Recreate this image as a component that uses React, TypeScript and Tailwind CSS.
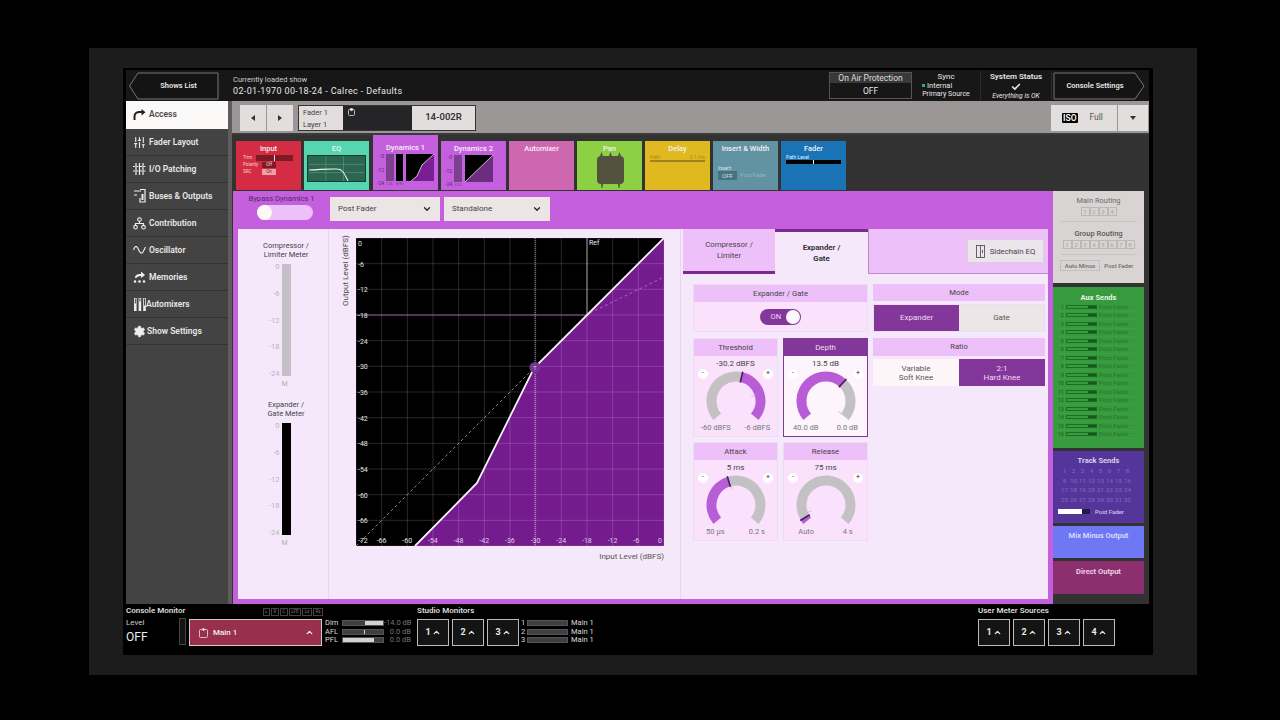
import React from "react";
import { ChevronDown, ChevronUp, Check, Settings, SlidersVertical } from "lucide-react";

function polar(cx: number, cy: number, r: number, deg: number) {
  const a = ((deg - 90) * Math.PI) / 180;
  return [cx + r * Math.cos(a), cy + r * Math.sin(a)];
}
function arc(cx: number, cy: number, r: number, a0: number, a1: number) {
  const [x0, y0] = polar(cx, cy, r, a0);
  const [x1, y1] = polar(cx, cy, r, a1);
  const large = a1 - a0 > 180 ? 1 : 0;
  return `M${x0} ${y0}A${r} ${r} 0 ${large} 1 ${x1} ${y1}`;
}

const NAV_ICONS: Record<string, React.ReactNode> = {
  Access: (
    <svg width="13" height="12" viewBox="0 0 13 12" fill="none" stroke="#222" strokeWidth="2">
      <path d="M1.5 11V7.5C1.5 4.5 4 3 6.5 3H10" />
      <path d="M8.5 0L12.5 3.2L8.5 6.4Z" fill="#222" stroke="none" />
    </svg>
  ),
  "Fader Layout": <SlidersVertical size={13} color="#eee" strokeWidth={2} />,
  "I/O Patching": (
    <svg width="13" height="12" viewBox="0 0 13 12" fill="none" stroke="#eee" strokeWidth="1.2">
      <path d="M3 0V12M6.5 0V12M10 0V12" />
      <path d="M0 3.5H13M0 8H13" strokeDasharray="2 1.5" />
    </svg>
  ),
  "Buses & Outputs": (
    <svg width="12" height="14" viewBox="0 0 12 14" fill="none" stroke="#eee" strokeWidth="1.2">
      <path d="M0 2H7M0 6H3M6 0.5H11V13H6V9" />
      <path d="M8.5 5V11" strokeWidth="2" />
    </svg>
  ),
  Contribution: (
    <svg width="13" height="13" viewBox="0 0 13 13" fill="none" stroke="#eee" strokeWidth="1.1">
      <circle cx="6.5" cy="2.5" r="1.8" />
      <circle cx="2.5" cy="10.2" r="1.8" />
      <circle cx="10.5" cy="10.2" r="1.8" />
      <path d="M6.5 4.3V6.5M2.5 8.4V6.5H10.5V8.4" />
    </svg>
  ),
  Oscillator: (
    <svg width="13" height="8" viewBox="0 0 13 8" fill="none" stroke="#eee" strokeWidth="1.1">
      <path d="M0.5 4C2 -1 4 -0.5 5.5 3.5C7 7.5 9 8 10 6L12.5 1" />
    </svg>
  ),
  Memories: (
    <svg width="13" height="12" viewBox="0 0 13 12" fill="#eee" stroke="none">
      <circle cx="2" cy="10.5" r="1.3" />
      <circle cx="6.5" cy="10.5" r="1.3" />
      <circle cx="11" cy="10.5" r="1.3" />
      <path d="M2 7C2 4 4 3 8 3V0.5L12 4L8 7V5C5 5 4 6 3.5 7Z" />
    </svg>
  ),
  Automixers: (
    <svg width="12" height="13" viewBox="0 0 12 13" fill="#eee">
      <rect x="0" y="0" width="2.6" height="13" />
      <rect x="4.6" y="0" width="2.6" height="13" />
      <rect x="9.2" y="0" width="2.6" height="13" />
      <rect x="0.8" y="0.5" width="1" height="5" fill="#444" />
      <rect x="5.4" y="0.5" width="1" height="3" fill="#444" />
      <rect x="10" y="0.5" width="1" height="7" fill="#444" />
    </svg>
  ),
  "Show Settings": <Settings size={13} color="#eee" fill="#eee" strokeWidth={1.5} />,
};

function NavItem({ label, active, gap }: { label: string; active?: boolean; gap: string }) {
  return (
    <div
      className={`flex items-center pl-[7px] border-b text-[8.5px] font-semibold ${gap} ${
        active ? "h-[28px] bg-[#fbf8f8] text-[#4a4a4a] border-[#fbf8f8]" : "h-[27px] bg-[#444343] text-[#e8e8e8] border-[#333]"
      }`}
    >
      <span className="w-[13px] flex justify-center shrink-0">{NAV_ICONS[label]}</span>
      <span>{label}</span>
    </div>
  );
}

function Tab({ title, w, bg, active, extra, children }: { title: string; w: string; bg: string; active?: boolean; extra?: string; children?: React.ReactNode }) {
  return (
    <div className={`${w} ${bg} ${extra ?? ""} ${active ? "h-[55px] pt-[8px]" : "h-[49px] pt-[3px] mt-[6px]"} flex flex-col items-center shrink-0 overflow-hidden`}>
      <div className="text-[7.5px] font-medium text-[#f6eef6] leading-[10px]">{title}</div>
      {children}
    </div>
  );
}

function MiniMeters({ double }: { double?: boolean }) {
  return (
    <div className="flex mt-[1px] w-full pl-[4px] gap-[2px]">
      <div className="flex flex-col justify-between h-[32px] text-[5px] text-[#5b2a6b] text-right w-[7px] leading-[5px]">
        <span>-0</span><span>-12</span><span>-24</span>
      </div>
      <div className="flex flex-col items-center">
        <div className="w-[8px] h-[27px] bg-[#7d3f8f]" />
        <span className="text-[4px] leading-[5px] text-[#6b3a7a]">C/L</span>
      </div>
      {double && (
        <div className="flex flex-col items-center">
          <div className="w-[7px] h-[27px] bg-black" />
          <span className="text-[4px] leading-[5px] text-[#6b3a7a]">E/G</span>
        </div>
      )}
      <svg width="28" height="27" viewBox="0 0 28 27" className="ml-[1px] bg-black">
        {double ? (
          <>
            <polygon points="5,27 11,22 16,11 28,0 28,27" fill="#7a1f93" />
            <polyline points="5,27 11,22 16,11 28,0" fill="none" stroke="#eee" strokeWidth="0.8" />
          </>
        ) : (
          <>
            <polygon points="0,27 28,0 28,27" fill="#6c2d80" />
            <line x1="0" y1="27" x2="28" y2="0" stroke="#d8c8dc" strokeWidth="0.9" />
          </>
        )}
      </svg>
    </div>
  );
}

function Graph() {
  const S = 308;
  const step = S / 12;
  const ticks = Array.from({ length: 13 }, (_, i) => i);
  return (
    <svg width={S} height={S} viewBox={`0 0 ${S} ${S}`} className="block bg-black shrink-0">
      <polygon points={`59,308 121,245 178,130 308,0 308,308`} fill="#741c8e" />
      {ticks.map((i) => (
        <g key={i}>
          <line x1={i * step} y1="0" x2={i * step} y2={S} stroke="#fff" strokeOpacity="0.2" strokeWidth="0.8" />
          <line x1="0" y1={i * step} x2={S} y2={i * step} stroke="#fff" strokeOpacity="0.2" strokeWidth="0.8" />
        </g>
      ))}
      <line x1="0" y1="77" x2="231" y2="77" stroke="#8a5a9c" strokeWidth="1" />
      <line x1="231" y1="0" x2="231" y2="77" stroke="#bbb" strokeWidth="0.8" />
      <line x1="179" y1="0" x2="179" y2="308" stroke="#ddd" strokeOpacity="0.7" strokeWidth="1" strokeDasharray="1 1" />
      <line x1="0" y1="308" x2="178" y2="130" stroke="#bbb" strokeWidth="0.7" strokeDasharray="3 2.5" />
      <path d="M234 75L308 39" fill="none" stroke="#b77ac8" strokeWidth="0.8" strokeDasharray="3 2.5" />
      <polyline points="59,308 121,245 178,130 308,0" fill="none" stroke="#f7f2f7" strokeWidth="1.8" />
      <circle cx="179" cy="129.5" r="5.5" fill="#77358d" />
      <text x="179" y="132" fontSize="5.5" fill="#ddd" textAnchor="middle">T</text>
      <text x="233" y="7" fontSize="7" fill="#eee">Ref</text>
      {ticks.slice(0, 12).map((i) => (
        <text key={"y" + i} x="2" y={i * step + 8 - (i === 0 ? 0 : 5)} fontSize="7" fill="#e4e4e4" dominantBaseline="auto">
          {i === 0 ? "0" : `-${i * 6}`}
        </text>
      ))}
      {ticks.map((i) => (
        <text key={"x" + i} x={i === 12 ? 302 : i * step + (i === 0 ? 2 : -5)} y="305" fontSize="7" fill={i > 2 ? "#e0cfe6" : "#e4e4e4"}>
          {i === 12 ? "0" : `-${72 - i * 6}`}
        </text>
      ))}
    </svg>
  );
}

function Knob({
  title, value, min, max, marker, tick, from, selected,
}: { title: string; value: string; min: string; max: string; marker: number; tick: number; from: "start" | "end"; selected?: boolean }) {
  const cx = 30, cy = 31, r = 24.5, A = 130;
  const purple = from === "start" ? arc(cx, cy, r, -A, marker) : arc(cx, cy, r, marker, A);
  const gray = from === "start" ? arc(cx, cy, r, marker, A) : arc(cx, cy, r, -A, marker);
  const [mx0, my0] = polar(cx, cy, r - 5.5, marker);
  const [mx1, my1] = polar(cx, cy, r + 5.5, marker);
  const [tx0, ty0] = polar(cx, cy, 16, tick);
  const [tx1, ty1] = polar(cx, cy, 20, tick);
  return (
    <div className={`w-[85px] h-[99px] flex flex-col border ${selected ? "border-[#7f3a96] bg-[#fdf5fb]" : "border-[#eedcf5] bg-[#fae2fd]"}`}>
      <div className={`h-[17px] shrink-0 flex items-center justify-center text-[7.8px] ${selected ? "bg-[#84379b] text-[#f3dcf8]" : "bg-[#eec0fa] text-[#444]"}`}>
        {title}
      </div>
      <div className="text-[8px] leading-[10px] text-[#444] text-center mt-[3px]">{value}</div>
      <div className="flex justify-between px-[4px] h-[0px] relative z-10">
        <span className="w-[10px] h-[10px] rounded-full bg-white text-[7px] leading-[9px] text-center text-[#555]">-</span>
        <span className="w-[10px] h-[10px] rounded-full bg-white text-[7px] leading-[9px] text-center text-[#333]">+</span>
      </div>
      <svg width="60" height="56" viewBox="0 0 60 56" className="mx-auto mt-[1px] shrink-0">
        <path d={gray} fill="none" stroke="#c3c1c3" strokeWidth="10" />
        <path d={purple} fill="none" stroke="#b85dd5" strokeWidth="10" />
        <line x1={mx0} y1={my0} x2={mx1} y2={my1} stroke="#4a1a66" strokeWidth="1.6" />
        <line x1={tx0} y1={ty0} x2={tx1} y2={ty1} stroke="#bdb8bd" strokeWidth="0.8" />
      </svg>
      <div className="flex justify-around text-[7.5px] text-[#777] leading-[10px] mt-[-3px]">
        <span>{min}</span><span>{max}</span>
      </div>
    </div>
  );
}

function SectionHead({ children, h = "h-[17px]" }: { children: React.ReactNode; h?: string }) {
  return <div className={`${h} flex items-center justify-center bg-[#eec0fa] text-[7.7px] text-[#444]`}>{children}</div>;
}

function Meter({ title, dark }: { title: [string, string]; dark?: boolean }) {
  return (
    <div className="flex flex-col items-center">
      <div className="text-[7.5px] leading-[9px] text-[#444] text-center ml-[6px] whitespace-nowrap">{title[0]}<br />{title[1]}</div>
      <div className="flex gap-[3px] mt-[5px] ml-[-9px] items-start">
        <div className="flex flex-col justify-between items-end h-[116px] mt-[-2px] w-[14px] text-[7.5px] leading-[9px] text-[#b9b4bb]">
          <span>0</span><span>-6</span><span>-12</span><span>-18</span><span>-24</span>
        </div>
        <div className={`w-[9px] h-[112px] ${dark ? "bg-black" : "bg-[#c5c0c6]"}`} />
      </div>
      <div className="text-[7px] leading-[9px] text-[#b0abb2] ml-[3px] mt-[2px]">M</div>
    </div>
  );
}

function MonBtn({ n }: { n: number }) {
  return (
    <div className="w-[32px] h-[27px] border border-[#bbb] bg-[#141414] flex items-center justify-center gap-[1px] text-[9px] font-bold text-[#e8e8e8]">
      {n}<ChevronUp size={9} strokeWidth={3.5} />
    </div>
  );
}

function Num({ n, w = "w-[9px]" }: { n: number; w?: string }) {
  return <div className={`${w} h-[9px] border border-[#bdb8b8] text-[6px] leading-[7px] text-center text-[#b0abab]`}>{n}</div>;
}

export default function App() {
  const aux = Array.from({ length: 16 }, (_, i) => i + 1);
  const track = Array.from({ length: 32 }, (_, i) => i + 1);
  return (
    <div className="w-[1280px] h-[720px] bg-black pt-[48px] pl-[89px] overflow-hidden [font-family:Roboto,sans-serif]">
      <div className="w-[1108px] h-[627px] bg-[#1d1c1c] pl-[34px] pt-[20px]">
        <div className="w-[1030px] h-[587px] bg-black pl-[3px] pr-[4px] pt-[2px]">
          {/* header */}
          <div className="h-[31px] bg-[#181717] flex items-center text-[#e6e6e6] pr-[4px]">
            <div className="relative w-[91px] h-[28px] ml-[2px] flex items-center justify-center text-[7.5px] font-semibold shrink-0">
              <svg width="91" height="28" viewBox="0 0 91 28" className="absolute left-0 top-0" fill="#141414" stroke="#777" strokeWidth="1">
                <path d="M10 1H90V27H10L1.5 14Z" />
              </svg>
              <span className="relative pl-[10px]">Shows List</span>
            </div>
            <div className="ml-[14px] flex-1 pt-[1px]">
              <div className="text-[7.5px] leading-[10px] text-[#ccc]">Currently loaded show</div>
              <div className="text-[9px] leading-[12px] tracking-[0.35px]">02-01-1970 00-18-24 - Calrec - Defaults</div>
            </div>
            <div className="w-[83px] h-[27px] border border-[#555] flex flex-col text-center text-[8.5px] shrink-0">
              <div className="h-[10px] bg-[#3a3939] leading-[10px] text-[#ddd]">On Air Protection</div>
              <div className="flex-1 leading-[16px]">OFF</div>
            </div>
            <div className="w-[69px] text-[7.5px] leading-[9px] text-center shrink-0 border-r border-[#2c2c2c] h-[29px] pt-[1px]">
              <div className="text-[8px]">Sync</div>
              <div className="flex items-center justify-start pl-[10px] gap-[2px]"><span className="w-[3px] h-[3px] bg-[#3fae4a]" />Internal</div>
              <div className="text-[7px]">Primary Source</div>
            </div>
            <div className="w-[71px] text-center shrink-0 border-r border-[#2c2c2c] h-[29px] pt-[1px]">
              <div className="text-[8px] leading-[9px] font-semibold">System Status</div>
              <div className="h-[11px] flex items-center justify-center"><Check size={10} strokeWidth={4} /></div>
              <div className="text-[6.8px] leading-[9px] italic">Everything is OK</div>
            </div>
            <div className="relative w-[92px] h-[28px] ml-[1px] flex items-center justify-center text-[7.5px] font-semibold shrink-0">
              <svg width="92" height="28" viewBox="0 0 92 28" className="absolute left-0 top-0" fill="#141414" stroke="#777" strokeWidth="1">
                <path d="M1 1H82L91 14L82 27H1Z" />
              </svg>
              <span className="relative pr-[8px]">Console Settings</span>
            </div>
          </div>

          <div className="flex h-[503px]">
            {/* nav */}
            <div className="w-[102px] bg-[#444343] shrink-0 flex flex-col">
              <NavItem label="Access" active gap="gap-[3px]" />
              <NavItem label="Fader Layout" gap="gap-[3px]" />
              <NavItem label="I/O Patching" gap="gap-[3px]" />
              <NavItem label="Buses & Outputs" gap="gap-[3px]" />
              <NavItem label="Contribution" gap="gap-[3px]" />
              <NavItem label="Oscillator" gap="gap-[3px]" />
              <NavItem label="Memories" gap="gap-[3px]" />
              <NavItem label="Automixers" gap="gap-[0px]" />
              <NavItem label="Show Settings" gap="gap-[1px]" />
            </div>
            <div className="w-[4px] bg-[#5e5c5c] shrink-0" />
            {/* main */}
            <div className="flex-1 flex flex-col min-w-0">
              {/* toolbar */}
              <div className="h-[34px] bg-[#9b9796] border-b-[2px] border-[#3a3a3a] flex items-center pl-[8px] pr-[1px] pt-[1px]">
                <div className="flex gap-[1px] h-[26px]">
                  <div className="w-[26px] bg-[#e2dede] flex items-center justify-center">
                    <span className="border-y-[3px] border-y-transparent border-r-[4px] border-r-[#333]" />
                  </div>
                  <div className="w-[26px] bg-[#e2dede] flex items-center justify-center">
                    <span className="border-y-[3px] border-y-transparent border-l-[4px] border-l-[#333]" />
                  </div>
                </div>
                <div className="ml-[5px] w-[178px] h-[26px] bg-[#e2dede] border border-[#333] flex items-stretch text-[#444]">
                  <div className="w-[44px] pl-[4px] text-[7.5px] leading-[12px] pt-[1px]">Fader 1<br />Layer 1</div>
                  <div className="w-[69px] bg-[#252528] pl-[5px] pt-[2px]">
                    <svg width="7" height="8" viewBox="0 0 7 8" fill="none" stroke="#ddd" strokeWidth="0.8">
                      <rect x="0.5" y="1.5" width="6" height="6" rx="1" />
                      <circle cx="3.5" cy="1.5" r="1.2" fill="#fff" />
                    </svg>
                  </div>
                  <div className="flex-1 flex items-center justify-center text-[9.5px] font-semibold text-[#333]">14-002R</div>
                </div>
                <div className="flex-1" />
                <div className="w-[66px] h-[26px] bg-[#e2dede] flex items-center pl-[11px] gap-[12px] text-[8.5px] text-[#555]">
                  <span className="bg-black text-white font-semibold px-[1px] rounded-[1px] leading-[10px]">ISO</span>
                  <span>Full</span>
                </div>
                <div className="w-[30px] h-[26px] ml-[1px] bg-[#e2dede] flex items-center justify-center">
                  <span className="border-x-[3.5px] border-x-transparent border-t-[4px] border-t-[#333]" />
                </div>
              </div>

              {/* tabs */}
              <div className="h-[56px] bg-[#333232] flex gap-[3px] pl-[4px]">
                <Tab title="Input" w="w-[65px]" bg="bg-[#d42d43]">
                  <div className="w-full pl-[7px] text-[4.5px] leading-[7px] text-[#f6d4d8]">
                    <div className="flex items-center gap-[3px]"><span className="w-[10px]">Trim</span><span className="w-[37px] h-[6px] bg-[#7c1a25] flex justify-center"><span className="w-[1px] bg-[#ddd]" /></span></div>
                    <div className="flex items-center gap-[2px]"><span className="w-[17px]">Polarity</span><span className="w-[14px] h-[6px] bg-[#7c1a25] text-center leading-[6px]">Off</span></div>
                    <div className="flex items-center gap-[2px]"><span className="w-[17px]">SRC</span><span className="w-[14px] h-[6px] bg-[#f0a0ac] text-[#7c1a25] text-center leading-[6px]">On</span></div>
                  </div>
                </Tab>
                <Tab title="EQ" w="w-[65px]" bg="bg-[#55d6b0]">
                  <svg width="59" height="27" viewBox="0 0 59 27" className="mt-[1px] bg-[#2b6650] border border-[#1c3a30]">
                    <path d="M18 0V27M37 0V27M0 9H59M0 18H59" stroke="#6d9e8d" strokeWidth="0.6" />
                    <path d="M0 15C10 15 20 13.5 30 14C37 14 38 20 42 27" fill="none" stroke="#f4f4f4" strokeWidth="1.1" />
                  </svg>
                </Tab>
                <Tab title="Dynamics 1" w="w-[65px]" bg="bg-[#c45fdd]" active extra="ml-[1px]">
                  <MiniMeters double />
                </Tab>
                <Tab title="Dynamics 2" w="w-[65px]" bg="bg-[#c45fdd]">
                  <MiniMeters />
                </Tab>
                <Tab title="Automixer" w="w-[65px]" bg="bg-[#cd67b0]" />
                <Tab title="Pan" w="w-[65px]" bg="bg-[#8ed044]">
                  <svg width="30" height="37" viewBox="0 0 30 37" className="mt-[-2px]">
                    <rect x="2" y="4" width="27" height="28" rx="4" fill="#53523f" />
                    <path d="M5 4L6.5 0L8 4ZM14 4L15.5 0L17 4ZM23 4L24.5 0L26 4Z" fill="#53523f" />
                    <path d="M6 32H8L7.5 36H6.5ZM23 32H25L24.5 36H23.5Z" fill="#53523f" />
                  </svg>
                </Tab>
                <Tab title="Delay" w="w-[65px]" bg="bg-[#e0b920]">
                  <div className="w-[55px] flex justify-between text-[5px] leading-[6px] text-[#a98a1a]"><span>Path</span><span>0.1 ms</span></div>
                  <div className="w-[55px] h-[2px] bg-[#9e8420]" />
                </Tab>
                <Tab title="Insert & Width" w="w-[65px]" bg="bg-[#6293a2]">
                  <div className="w-full pl-[5px] mt-[11px] text-[5px] leading-[6px] text-[#dfe8ea]">Insert:</div>
                  <div className="w-full pl-[5px] flex items-center gap-[3px] text-[5.5px] text-[#93b4bd]">
                    <span className="bg-[#47727e] text-[#cfe0e4] w-[19px] h-[9px] leading-[9px] text-center text-[6px]">OFF</span>Post Fader
                  </div>
                </Tab>
                <Tab title="Fader" w="w-[65px]" bg="bg-[#1a73b5]">
                  <div className="w-[55px] text-[5px] leading-[6px] text-[#e2eef7]">Path Level</div>
                  <div className="w-[55px] h-[4px] bg-black flex justify-center"><span className="w-[1px] bg-white" /></div>
                </Tab>
              </div>

              <div className="flex h-[413px] bg-[#333232]">
                {/* purple panel */}
                <div className="w-[820px] ml-[1px] bg-[#c45fdd] px-[5px] pb-[5px] flex flex-col shrink-0">
                  <div className="h-[38px] flex items-start shrink-0">
                    <div className="w-[87px] flex flex-col items-center pt-[3px] text-[7.6px] leading-[10px] text-[#4a2a66]">
                      <span>Bypass Dynamics 1</span>
                      <div className="w-[56px] h-[15px] rounded-full bg-[#eec0fa] mt-[1px] self-start relative left-[19px]">
                        <div className="w-[15px] h-[15px] rounded-full bg-[#fbf8f8]" />
                      </div>
                    </div>
                    <div className="ml-[5px] mt-[6px] w-[110px] h-[24px] bg-[#ebe5e6] flex items-center justify-between px-[8px] text-[8px] text-[#444]">
                      Post Fader<ChevronDown size={10} strokeWidth={3} color="#222" />
                    </div>
                    <div className="ml-[4px] mt-[6px] w-[106px] h-[24px] bg-[#ebe5e6] flex items-center justify-between px-[8px] text-[8px] text-[#444]">
                      Standalone<ChevronDown size={10} strokeWidth={3} color="#222" />
                    </div>
                  </div>
                  <div className="flex-1 bg-[#f6e8fb] flex min-h-0">
                    {/* meters */}
                    <div className="w-[91px] border-r border-[#e6d6ec] flex flex-col items-center pt-[12px] gap-[11px] shrink-0">
                      <Meter title={["Compressor /", "Limiter Meter"]} />
                      <Meter title={["Expander /", "Gate Meter"]} dark />
                    </div>
                    {/* graph */}
                    <div className="w-[352px] border-r border-[#e6d6ec] shrink-0 pt-[9px] pl-[12px]">
                      <div className="flex gap-[4px] items-start">
                        <div className="[writing-mode:vertical-rl] rotate-180 text-[8px] leading-[10px] text-[#444] h-[68px] w-[11px] whitespace-nowrap">Output Level (dBFS)</div>
                        <Graph />
                      </div>
                      <div className="w-[323px] text-right text-[8px] leading-[10px] text-[#555] mt-[6px]">Input Level (dBFS)</div>
                    </div>
                    {/* right */}
                    <div className="flex-1 min-w-0">
                      <div className="h-[45px] flex pl-[2px] text-[7.8px] leading-[11px] text-center">
                        <div className="w-[92px] bg-[#eec0fa] border-b-[3px] border-[#7a2a8f] text-[#444] flex items-center justify-center">Compressor /<br />Limiter</div>
                        <div className="w-[93px] border-t-[3px] border-[#7a2a8f] font-bold text-[#333] flex items-center justify-center">Expander /<br />Gate</div>
                        <div className="flex-1 bg-[#eec0fa] border-b border-l border-[#b98bc9] flex items-start justify-end pt-[10px] pr-[4px]">
                          <div className="w-[77px] h-[24px] bg-[#ebe4ea] border border-[#d8cfd8] flex items-center justify-center gap-[5px] text-[7.8px] text-[#444]">
                            <svg width="9" height="13" viewBox="0 0 9 13" fill="none" stroke="#555" strokeWidth="0.9"><rect x="0.5" y="0.5" width="8" height="12" /><path d="M4.5 0.5V12.5M6.5 5V8" /></svg>
                            Sidechain EQ
                          </div>
                        </div>
                      </div>
                      <div className="flex pl-[12px] pt-[10px] gap-[5px]">
                        <div className="w-[175px] flex flex-col gap-[5px] shrink-0">
                          <div className="h-[48px] mb-[1px] border border-[#eedcf5] bg-[#fae2fd] flex flex-col">
                            <SectionHead>Expander / Gate</SectionHead>
                            <div className="flex-1 flex items-center justify-center">
                              <div className="w-[41px] h-[16px] rounded-full bg-[#84379b] flex items-center justify-end text-[7.5px] text-[#f0dcf4] pr-[1px] gap-[5px]">
                                ON<span className="w-[14px] h-[14px] rounded-full bg-[#fcf8fc]" />
                              </div>
                            </div>
                          </div>
                          <div className="flex gap-[5px]">
                            <Knob title="Threshold" value="-30.2 dBFS" min="-60 dBFS" max="-6 dBFS" marker={13} tick={74} from="end" />
                            <Knob title="Depth" value="13.5 dB" min="40.0 dB" max="0.0 dB" marker={43} tick={130} from="start" selected />
                          </div>
                          <div className="flex gap-[5px]">
                            <Knob title="Attack" value="5 ms" min="50 µs" max="0.2 s" marker={-17} tick={-14} from="start" />
                            <Knob title="Release" value="75 ms" min="Auto" max="4 s" marker={-121} tick={-112} from="start" />
                          </div>
                        </div>
                        <div className="w-[172px] shrink-0">
                          <SectionHead>Mode</SectionHead>
                          <div className="flex h-[28px] mt-[3px] border border-[#eedcf5] text-[8px]">
                            <div className="flex-1 bg-[#84379b] text-[#f0dcf4] flex items-center justify-center">Expander</div>
                            <div className="flex-1 bg-[#ece6e8] text-[#555] flex items-center justify-center">Gate</div>
                          </div>
                          <div className="h-[6px]" />
                          <SectionHead h="h-[18px]">Ratio</SectionHead>
                          <div className="flex h-[27px] mt-[3px] text-[8px] leading-[9px] text-center">
                            <div className="flex-1 bg-[#fdf5f8] text-[#555] flex items-center justify-center">Variable<br />Soft Knee</div>
                            <div className="flex-1 bg-[#84379b] text-[#f0dcf4] flex items-center justify-center">2:1<br />Hard Knee</div>
                          </div>
                        </div>
                      </div>
                    </div>
                  </div>
                </div>

                {/* right rail */}
                <div className="flex-1 flex flex-col gap-[3px] pr-[5px] min-w-0 font-medium">
                  <div className="h-[92px] bg-[#d9d4d4] flex flex-col items-center pt-[5px] text-[#6e6a6a] shrink-0">
                    <div className="text-[7.5px] leading-[9px] font-normal">Main Routing</div>
                    <div className="flex mt-[2px]">{[1, 2, 3, 4].map((n) => <Num key={n} n={n} />)}</div>
                    <div className="w-[76px] h-px bg-[#c8c3c3] mt-[5px]" />
                    <div className="text-[7.5px] leading-[9px] mt-[7px] font-medium text-[#5c5858]">Group Routing</div>
                    <div className="flex mt-[2px]">{[1, 2, 3, 4, 5, 6, 7, 8].map((n) => <Num key={n} n={n} />)}</div>
                    <div className="w-[76px] h-px bg-[#c8c3c3] mt-[5px]" />
                    <div className="flex items-center mt-[5px] gap-[4px] text-[6px] mr-[4px]">
                      <span className="border border-[#c4bfbf] px-[4px] h-[11px] leading-[9px] whitespace-nowrap">Auto Minus</span>
                      <span className="whitespace-nowrap">Post Fader</span>
                    </div>
                  </div>
                  <div className="h-[161px] bg-[#389a3f] pt-[6px] shrink-0 mt-[1px]">
                    <div className="text-[7.5px] leading-[10px] font-bold text-[#e6f4e6] text-center">Aux Sends</div>
                    <div className="mx-[4px] flex flex-col">
                      {aux.map((n) => (
                        <div key={n} className="h-[8.5px] flex items-center border-b border-[#3aa142] text-[5.5px] text-[#1d6e24]">
                          <span className="w-[7px] text-right leading-[8px]">{n}</span>
                          <span className="ml-[2px] w-[31px] h-[4px] border border-[#1d6e24] flex justify-end"><span className="w-[8px] bg-[#155a1b]" /></span>
                          <span className="ml-[2px] text-[6.2px] leading-[8px] text-[#2a7a31]">Post Fader</span>
                        </div>
                      ))}
                    </div>
                  </div>
                  <div className="h-[72px] bg-[#54369a] pt-[5px] shrink-0">
                    <div className="text-[7.5px] leading-[9px] font-bold text-[#d8d0ee] text-center">Track Sends</div>
                    <div className="grid grid-cols-8 w-[72px] ml-[7px] mt-[1px] text-[6px] leading-[9.5px] text-[#7b62bc] text-center">
                      {track.map((n) => <span key={n}>{n}</span>)}
                    </div>
                    <div className="flex items-center ml-[5px] mt-[3px] text-[6px] text-[#cfc7e8] gap-[5px]">
                      <span className="w-[32px] h-[5px] bg-[#241a44] flex"><span className="w-[24px] bg-white" /></span>
                      Post Fader
                    </div>
                  </div>
                  <div className="h-[32px] bg-[#6f78f4] pt-[5px] text-[7.5px] leading-[9px] font-bold text-[#d6d9fb] text-center shrink-0">Mix Minus Output</div>
                  <div className="h-[33px] bg-[#8c2f6f] pt-[6px] text-[7.5px] leading-[9px] font-bold text-[#eccfe4] text-center shrink-0">Direct Output</div>
                </div>
              </div>
            </div>
          </div>

          {/* footer */}
          <div className="h-[46px] bg-black flex text-[#ddd]">
            <div className="w-[139px] shrink-0 flex">
              <div className="w-[53px] pt-[2px]">
                <div className="text-[8px] leading-[10px] font-semibold whitespace-nowrap">Console Monitor</div>
                <div className="text-[8px] leading-[10px] text-[#ccc] mt-[2px]">Level</div>
                <div className="text-[12px] leading-[14px] text-[#eee] mt-[2px]">OFF</div>
              </div>
              <div className="w-[7px] h-[27px] mt-[14px] border border-[#444] bg-[#141414]" />
              <div className="flex-1" />
            </div>
            <div className="w-[136px] shrink-0 ml-[-76px]">
              <div className="flex justify-end gap-[1px] h-[13px] pt-[4px] pr-[2px] mb-[2px]">
                {["L", "R", "C", "LFE", "Ls", "Rs"].map((t) => (
                  <span key={t} className="border border-[#444] text-[4.5px] leading-[6px] h-[8px] px-[1.5px] text-[#777]">{t}</span>
                ))}
              </div>
              <div className="h-[27px] w-[133px] bg-[#98304b] border border-[#ccc] flex items-center pl-[9px] pr-[7px] text-[8px] text-[#eee] font-medium">
                <svg width="9" height="10" viewBox="0 0 9 10" fill="none" stroke="#e8c8d0" strokeWidth="0.9" className="mr-[5px]">
                  <rect x="0.5" y="1.5" width="8" height="8" rx="1" /><circle cx="4.5" cy="1.5" r="1" fill="#fff" />
                </svg>
                <span className="flex-1">Main 1</span>
                <ChevronUp size={9} strokeWidth={3.5} />
              </div>
            </div>
            <div className="w-[92px] shrink-0 pt-[15px] text-[7.5px] leading-[8.5px]">
              {[["Dim", "-14.0 dB", "ml-[22px] w-[19px]"], ["AFL", "0.0 dB", "ml-[21px] w-[1px]"], ["PFL", "0.0 dB", "ml-[0px] w-[31px]"]].map(([a, b, c]) => (
                <div key={a} className="flex items-center whitespace-nowrap">
                  <span className="w-[17px]">{a}</span>
                  <span className="w-[42px] h-[6px] bg-[#3f3f3f] border border-[#555] flex"><span className={`${c} bg-[#d2d2d2]`} /></span>
                  <span className="w-[27px] text-right text-[#777]">{b}</span>
                </div>
              ))}
            </div>
            <div className="w-[180px] shrink-0 pt-[2px]">
              <div className="text-[8px] leading-[10px] font-semibold mb-[3px]">Studio Monitors</div>
              <div className="flex">
                <div className="flex gap-[3px]"><MonBtn n={1} /><MonBtn n={2} /><MonBtn n={3} /></div>
                <div className="pl-[2px] text-[7.5px] leading-[8.5px]">
                  {[1, 2, 3].map((n) => (
                    <div key={n} className="flex items-center whitespace-nowrap">
                      <span className="w-[5px]">{n}</span>
                      <span className="w-[41px] h-[6px] ml-[1px] bg-[#3f3f3f] border border-[#555]" />
                      <span className="ml-[3px]">Main 1</span>
                    </div>
                  ))}
                </div>
              </div>
            </div>
            <div className="ml-[381px] pt-[2px] shrink-0">
              <div className="text-[8px] leading-[10px] font-semibold mb-[3px]">User Meter Sources</div>
              <div className="flex gap-[3px]"><MonBtn n={1} /><MonBtn n={2} /><MonBtn n={3} /><MonBtn n={4} /></div>
            </div>
          </div>
        </div>
      </div>
    </div>
  );
}
